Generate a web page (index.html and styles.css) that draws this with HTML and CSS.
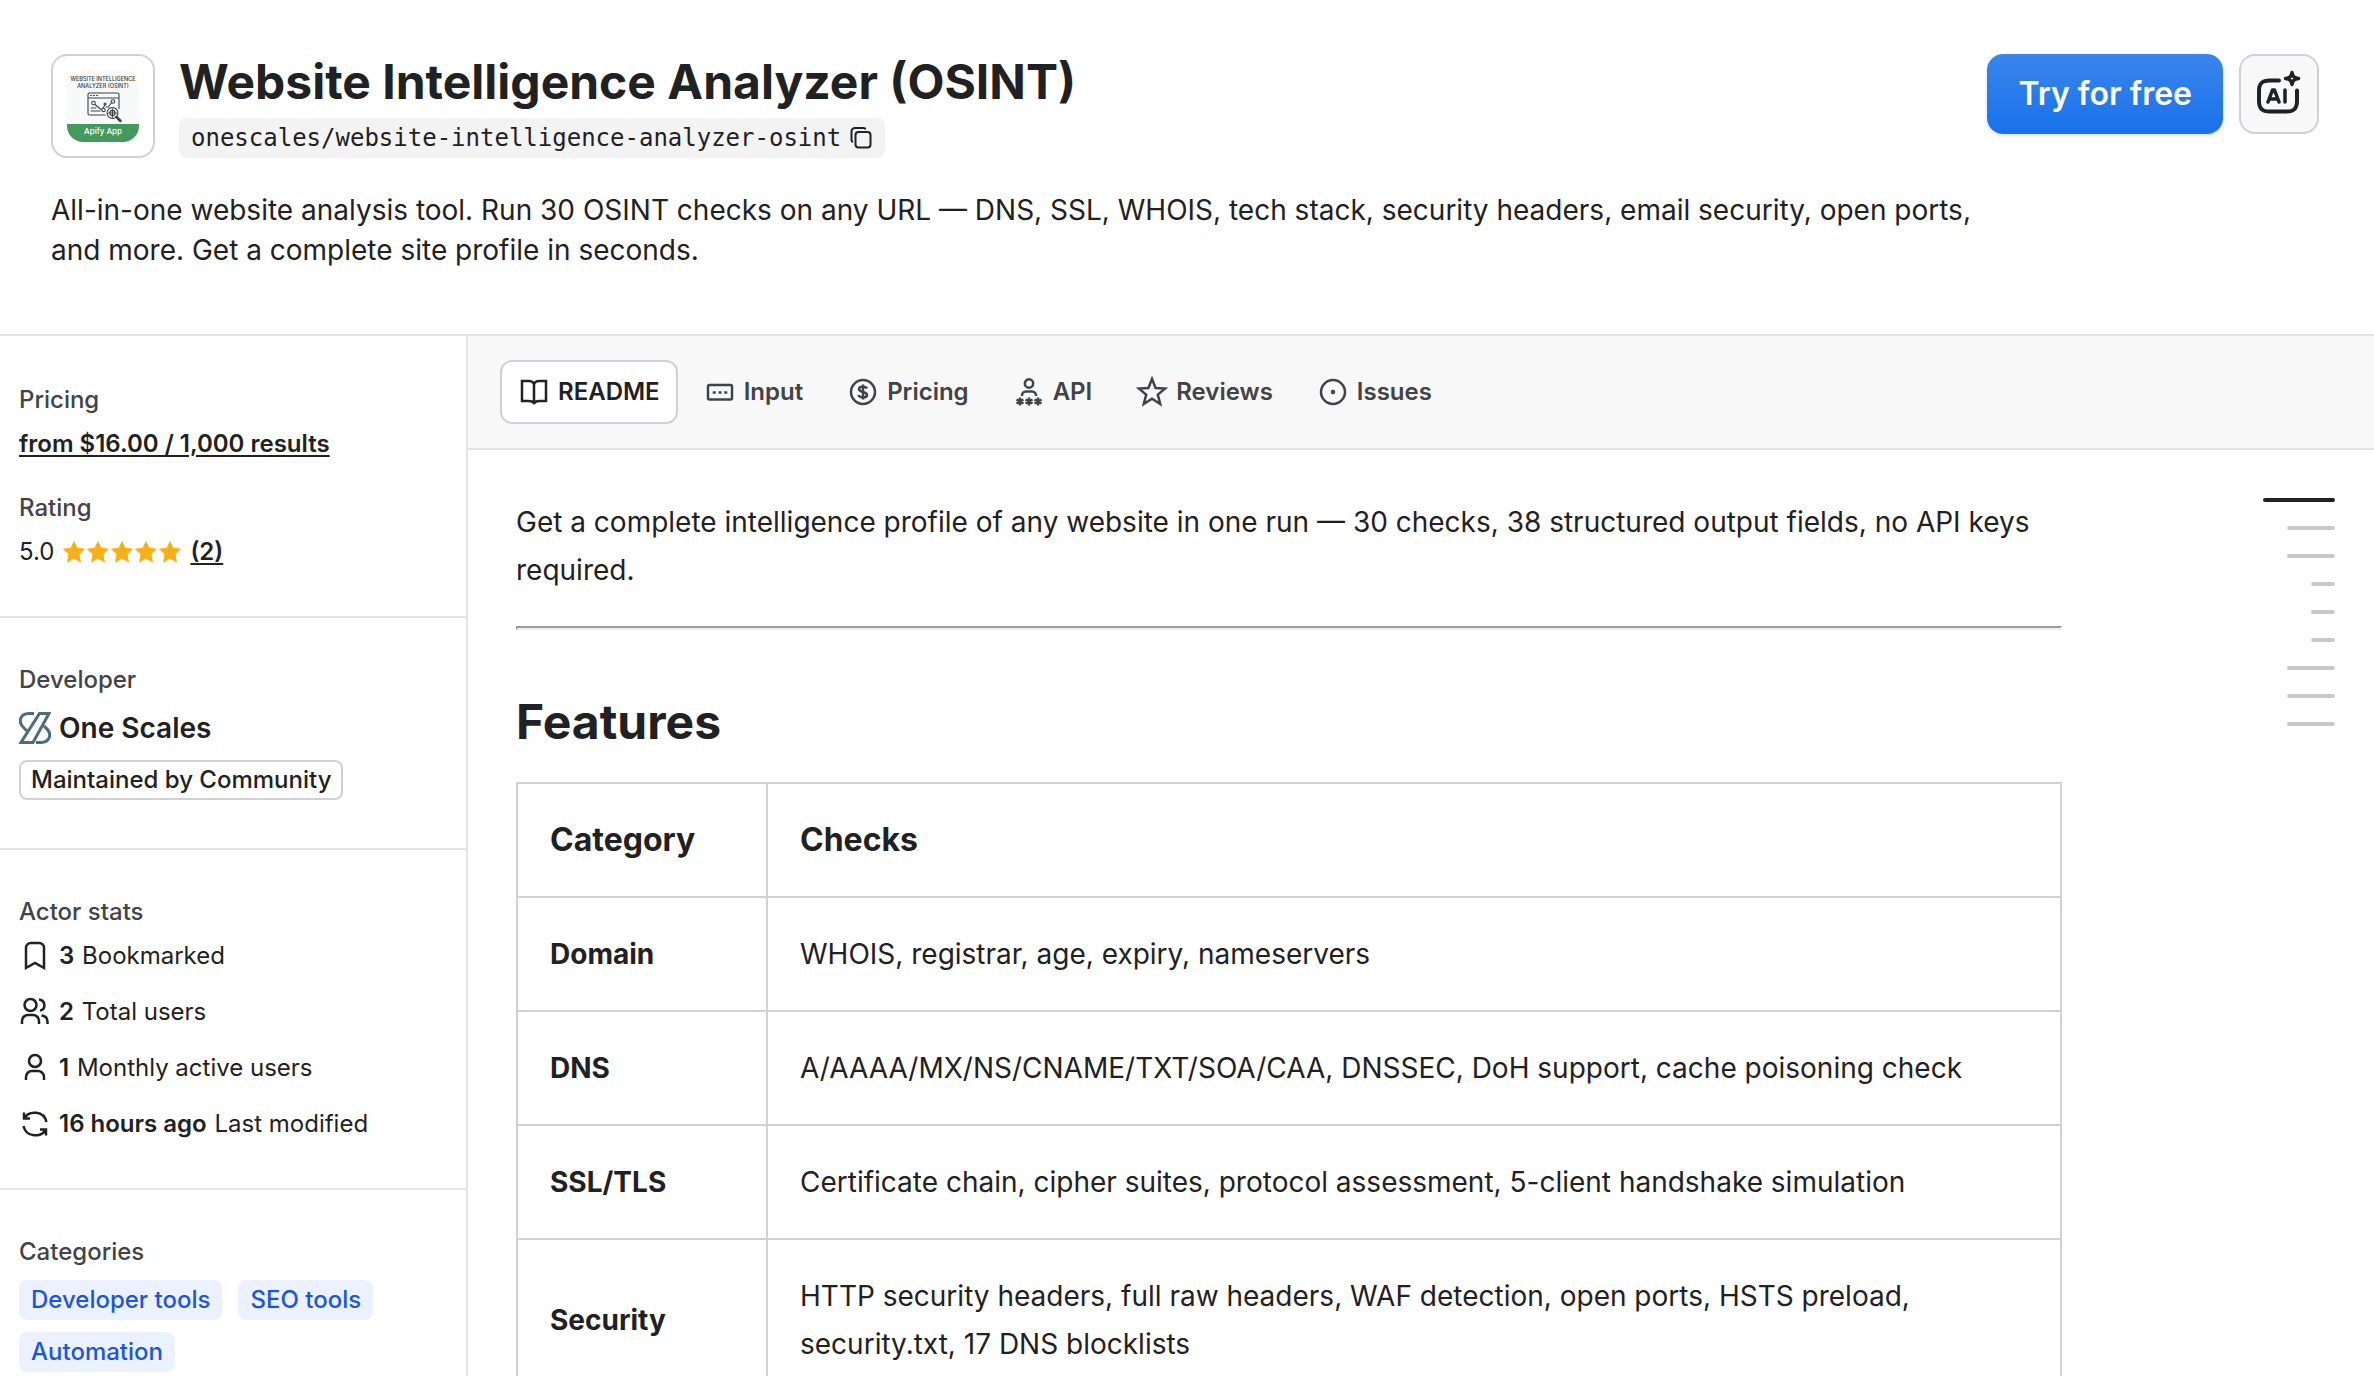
FILE: index.html
```html
<!DOCTYPE html>
<html lang="en">
<head>
<meta charset="utf-8">
<meta name="viewport" content="width=device-width, initial-scale=1">
<title>Website Intelligence Analyzer (OSINT)</title>
<link rel="stylesheet" href="styles.css">
</head>
<body>
<header class="actor-header">
  <div class="header-top">
    <div class="identity">
      <div class="actor-logo">
        <svg viewBox="0 0 72 72" width="72" height="72" role="img" aria-label="Website Intelligence Analyzer logo">
          <defs><clipPath id="logo-clip"><rect width="72" height="72" rx="16"/></clipPath></defs>
          <g clip-path="url(#logo-clip)">
            <rect width="72" height="72" fill="#f8f9f9"/>
            <rect y="54" width="72" height="18" fill="#449a5c"/>
          </g>
          <g font-family="Inter, sans-serif" text-anchor="middle">
            <text x="36" y="11" font-size="5.5" font-weight="500" fill="#33383d">WEBSITE INTELLIGENCE</text>
            <text x="36" y="17.500" font-size="5.5" font-weight="500" fill="#33383d">ANALYZER (OSINT)</text>
            <text x="36" y="64" font-size="8" font-weight="500" fill="#fff">Apify App</text>
          </g>
          <g fill="none" stroke="#3d4347" stroke-width="1.1" stroke-linecap="round">
            <path d="M38 45H22.500a1.500 1.500 0 0 1-1.500-1.500v-19a1.500 1.500 0 0 1 1.500-1.500h28a1.500 1.500 0 0 1 1.500 1.500v14M21 28h31M23.500 25.500h1M26.500 25.500h1M29.500 25.500h1M28 34.500l6 5M36 38l2-3M39 37l3 0M42 36l3-4M24 38h5M24 41h9"/>
            <circle cx="26.500" cy="33" r="1.800"/><circle cx="46" cy="31.500" r="1.800"/><circle cx="36.500" cy="40" r="1.700"/><circle cx="38" cy="34" r="1"/>
            <circle cx="45.500" cy="43" r="5.400" fill="#f8f9f9"/><circle cx="45.500" cy="43" r="2.600"/><path d="M45.500 39v8M41.500 43h8"/>
            <path d="M49.500 47l4 4" stroke-width="2.500"/>
          </g>
        </svg>
      </div>
      <div class="identity-text">
        <h1>Website Intelligence Analyzer (OSINT)</h1>
        <div class="slug">
          <code>onescales/website-intelligence-analyzer-osint</code>
          <button class="copy" type="button" aria-label="Copy"><svg viewBox="0 0 24 24" width="24" height="24"><path d="M16.500 3.500A2 2 0 0 0 14.500 2H6a3.500 3.500 0 0 0-3.500 3.500V14a2 2 0 0 0 1.500 2"/><rect x="6.500" y="6" width="15" height="15.500" rx="3"/></svg></button>
        </div>
      </div>
    </div>
    <div class="actions">
      <button class="primary" type="button">Try for free</button>
      <button class="ai" type="button" aria-label="AI options">
        <svg viewBox="0 0 48 48" width="48" height="48"><path d="M24 10.500h-9.500C7 10.500 4 13.500 4 21v10c0 7.500 3 10.500 10.500 10.500h17C39 41.500 42 38.500 42 31V20.500"/><path d="M13 32l4.500-12h2L24 32M15 29h7.500M30 20v12" stroke-width="3.500"/><path d="M37 2.500c.7 4 2 5.300 6.500 6-4.500.7-5.800 2-6.500 6-.7-4-2-5.300-6.500-6 4.500-.7 5.800-2 6.500-6z" stroke-width="3.500"/></svg>
      </button>
    </div>
  </div>
  <p class="description">All-in-one website analysis tool. Run 30 OSINT checks on any URL — DNS, SSL, WHOIS, tech stack, security headers, email security, open ports, and more. Get a complete site profile in seconds.</p>
</header>

<div class="layout">
  <aside class="sidebar">
    <section>
      <div class="field">
        <h2>Pricing</h2>
        <a class="strong-link" href="#pricing">from $16.00 / 1,000 results</a>
      </div>
      <div class="field">
        <h2>Rating</h2>
        <div class="rating">
          <span>5.0</span>
          <svg class="stars" viewBox="0 0 120 24" width="120" height="24" role="img" aria-label="5 stars">
            <defs><path id="star" d="M12 1.700l3.100 6.600 7.300.9-5.400 5 1.400 7.600L12 18.200l-6.400 3.600L7 14.200l-5.400-5 7.300-.9z"/></defs>
            <use href="#star"/><use href="#star" x="24"/><use href="#star" x="48"/><use href="#star" x="72"/><use href="#star" x="96"/>
          </svg>
          <a class="strong-link" href="#reviews">(2)</a>
        </div>
      </div>
    </section>
    <section>
      <h2>Developer</h2>
      <a class="developer" href="#developer">
        <svg viewBox="0 0 32 32" width="32" height="32" aria-hidden="true"><path d="M15 1.500H10C1 1.500-1.500 10 5 16l3 3M20.500 1.500H30L14 30.500H2zM17 30.500h5c9 0 11.500-9 5-14.500l-2-2"/></svg>
        <span>One Scales</span>
      </a>
      <div class="badge">Maintained by Community</div>
    </section>
    <section>
      <h2>Actor stats</h2>
      <ul class="stats">
        <li><svg viewBox="0 0 32 32" width="32" height="32"><path d="M7 28V8a5 5 0 0 1 5-5h8a5 5 0 0 1 5 5v20l-9-5z"/></svg><span><strong>3</strong> Bookmarked</span></li>
        <li><svg viewBox="0 0 32 32" width="32" height="32"><circle cx="11.500" cy="9" r="6"/><path d="M3 28v-3a6 6 0 0 1 6-6h5a6 6 0 0 1 6 6v3M20 3.500c7 1 7 10 1 11M22.500 19.500c4 .5 6 3 6 6V28"/></svg><span><strong>2</strong> Total users</span></li>
        <li><svg viewBox="0 0 32 32" width="32" height="32"><circle cx="16" cy="9" r="6"/><path d="M7 28v-3a6 6 0 0 1 6-6h6a6 6 0 0 1 6 6v3"/></svg><span><strong>1</strong> Monthly active users</span></li>
        <li><svg viewBox="0 0 32 32" width="32" height="32"><path d="M5 10.500C10 2 25 2.500 27.500 14M5 4.500v6h6M27 21.500C22 30 7 29.500 4.500 18M27 27.500v-6h-6"/></svg><span><strong>16 hours ago</strong> Last modified</span></li>
      </ul>
    </section>
    <section>
      <h2>Categories</h2>
      <div class="categories">
        <a href="#developer-tools">Developer tools</a>
        <a href="#seo-tools">SEO tools</a>
        <a href="#automation">Automation</a>
      </div>
    </section>
  </aside>

  <main>
    <nav class="tabs" aria-label="Actor sections">
      <a class="active" href="#readme" aria-current="page"><svg viewBox="0 0 32 32" width="32" height="32"><path d="M16 8c-1-2-3-3-5-3H4v20h7c2 0 4 1 5 2 1-1 3-2 5-2h7V5h-7c-2 0-4 1-5 3zM16 8v19"/></svg>README</a>
      <a href="#input"><svg viewBox="0 0 32 32" width="32" height="32"><rect x="4" y="9" width="24" height="14.500" rx="1.500"/><path d="M10 16.500h.5M15.800 16.500h.5M21.500 16.500h.5" stroke-linecap="square"/></svg>Input</a>
      <a href="#pricing"><svg viewBox="0 0 32 32" width="32" height="32"><circle cx="16" cy="16" r="12"/><path d="M20 12.500c-1-2.500-8-2.500-8 .5 0 4 8 2 8 6 0 3.200-7.500 3.200-8.500 0M16 8.500v15"/></svg>Pricing</a>
      <a href="#api"><svg viewBox="0 0 32 32" width="32" height="32"><circle cx="16" cy="7.500" r="4.200"/><path d="M9 20v-.5a4 4 0 0 1 4-4h6a4 4 0 0 1 4 4v.5"/><path d="M7 21.500v8M3.500 23.500l7 4M10.500 23.500l-7 4M16 21.500v8M12.500 23.500l7 4M19.500 23.500l-7 4M25 21.500v8M21.500 23.500l7 4M28.500 23.500l-7 4"/></svg>API</a>
      <a href="#reviews"><svg viewBox="0 0 32 32" width="32" height="32"><path d="M16 3l3.600 9 9.400.6-7.200 6 2.400 9.400-8.200-5.200L7.800 28l2.400-9.400-7.200-6 9.400-.6z"/></svg>Reviews</a>
      <a href="#issues"><svg viewBox="0 0 32 32" width="32" height="32"><circle cx="16" cy="16" r="12"/><circle cx="16" cy="16" r="1.300" stroke-width="2"/></svg>Issues</a>
    </nav>
    <div class="content">
      <article class="readme">
        <p>Get a complete intelligence profile of any website in one run — 30 checks, 38 structured output fields, no API keys required.</p>
        <hr>
        <h2>Features</h2>
        <table>
          <thead><tr><th scope="col">Category</th><th scope="col">Checks</th></tr></thead>
          <tbody>
            <tr><th scope="row">Domain</th><td>WHOIS, registrar, age, expiry, nameservers</td></tr>
            <tr><th scope="row">DNS</th><td>A/AAAA/MX/NS/CNAME/TXT/SOA/CAA, DNSSEC, DoH support, cache poisoning check</td></tr>
            <tr><th scope="row">SSL/TLS</th><td>Certificate chain, cipher suites, protocol assessment, 5-client handshake simulation</td></tr>
            <tr><th scope="row">Security</th><td>HTTP security headers, full raw headers, WAF detection, open ports, HSTS preload, security.txt, 17 DNS blocklists</td></tr>
          </tbody>
        </table>
      </article>
      <div class="outline" aria-hidden="true">
        <i class="level-1 current"></i><i class="level-2"></i><i class="level-2"></i><i class="level-3"></i><i class="level-3"></i><i class="level-3"></i><i class="level-2"></i><i class="level-2"></i><i class="level-2"></i>
      </div>
    </div>
  </main>
</div>
</body>
</html>
```
FILE: styles.css
```css
*, *::before, *::after { box-sizing: border-box; }

body {
  margin: 0;
  height: 100vh;
  overflow: hidden;
  background: #fff;
  color: #1f2123;
  font-family: Inter, "Liberation Sans", sans-serif;
  font-size: 24px;
  line-height: 32px;
}

h1, h2, p, ul { margin: 0; padding: 0; }
a { color: inherit; text-decoration: none; }
button { font: inherit; color: inherit; padding: 0; border: 0; background: none; cursor: pointer; }
svg { display: block; flex: none; fill: none; stroke: currentColor; stroke-width: 2.500; }

/* Header */
.actor-header {
  padding: 54px 55px 64px 51px;
  border-bottom: 2px solid #e4e4e5;
}
.header-top { display: flex; justify-content: space-between; align-items: flex-start; }
.identity { display: flex; gap: 24px; }
.actor-logo {
  display: grid;
  place-items: center;
  width: 104px;
  height: 104px;
  border: 2px solid #d0d1d6;
  border-radius: 16px;
}
.actor-logo svg { stroke: none; }
h1 { font-size: 48px; line-height: 56px; font-weight: 700; }
.slug {
  display: flex;
  align-items: center;
  gap: 8px;
  width: fit-content;
  height: 40px;
  margin-top: 8px;
  padding: 0 12px;
  border-radius: 8px;
  background: #f3f3f3;
}
.slug code { font-family: "DejaVu Sans Mono", "Liberation Mono", monospace; font-size: 24px; }
.copy svg { stroke-width: 2; }
.actions { display: flex; gap: 16px; }
.primary {
  height: 80px;
  padding: 0 31px;
  border-radius: 16px;
  background: linear-gradient(#3b84ec, #1872eb);
  box-shadow: 0 2px 4px rgba(31, 33, 35, 0.15);
  color: #fff;
  font-size: 32px;
  font-weight: 600;
}
.ai {
  display: grid;
  place-items: center;
  width: 80px;
  height: 80px;
  border: 2px solid #d0d1d6;
  border-radius: 16px;
  background: #f8f8f8;
}
.ai svg { stroke-width: 4; stroke-linecap: round; stroke-linejoin: round; }
.description { max-width: 1940px; margin-top: 32px; font-size: 28px; line-height: 40px; }

/* Page columns */
.layout { display: grid; grid-template-columns: 468px 1fr; }

/* Sidebar */
.sidebar { border-right: 2px solid #e4e4e5; }
.sidebar section { padding: 48px 19px; }
.sidebar section + section { padding-top: 46px; border-top: 2px solid #e4e4e5; }
.sidebar h2 { color: #414347; font-size: 24px; line-height: 32px; font-weight: 500; }
.field { display: flex; flex-direction: column; gap: 12px; align-items: flex-start; }
.field + .field { margin-top: 32px; }
.strong-link { font-weight: 600; text-decoration: underline; text-decoration-thickness: 2px; text-underline-offset: 3px; }
.rating { display: flex; align-items: center; gap: 8px; }
.stars { fill: #f6b118; stroke: #f6b118; stroke-width: 1; stroke-linejoin: round; }
.developer { display: flex; align-items: center; gap: 8px; margin-top: 16px; font-size: 28px; font-weight: 600; }
.developer svg { color: #4f6c7a; stroke-width: 3; }
.badge {
  width: fit-content;
  margin-top: 16px;
  padding: 2px 10px;
  border: 2px solid #d0d1d6;
  border-radius: 8px;
  font-weight: 500;
  line-height: 32px;
}
.stats { display: grid; gap: 24px; margin-top: 12px; list-style: none; }
.stats li { display: flex; align-items: center; gap: 8px; }
.stats strong { font-weight: 600; margin-right: 1px; }
.categories { display: flex; flex-wrap: wrap; gap: 12px 16px; margin-top: 12px; }
.categories a { padding: 4px 12px; border-radius: 8px; background: #ebf1ff; color: #1a56db; font-weight: 500; }

/* Tabs */
.tabs {
  display: flex;
  align-items: center;
  height: 114px;
  padding: 0 32px;
  border-bottom: 2px solid #e4e4e5;
  background: #f8f8f8;
}
.tabs a {
  display: flex;
  align-items: center;
  gap: 8px;
  height: 64px;
  padding: 0 16px;
  border: 2px solid transparent;
  border-radius: 12px;
  color: #414347;
  font-weight: 600;
}
.tabs a + a { margin-left: 8px; }
.tabs .active { border-color: #d0d1d6; background: #fff; color: #1f2123; }

/* Readme */
.content { display: flex; justify-content: space-between; padding: 48px 39px 48px 48px; }
.readme { flex: 0 1 1546px; font-size: 28px; line-height: 48px; }
.readme hr { margin: 32px 0 0; border: 2px solid; border-color: #9a9a9a #eee #eee #9a9a9a; }
.readme h2 { margin-top: 60px; font-size: 48px; line-height: 64px; font-weight: 700; }
.readme table { width: 100%; margin-top: 28px; border-collapse: collapse; }
.readme th, .readme td { padding: 32px; border: 2px solid #d0d1d6; text-align: left; font-weight: 400; }
.readme th { width: 250px; font-weight: 700; }
.readme thead th { font-size: 32px; }
.readme thead th + th { width: auto; }

.outline { display: flex; flex-direction: column; align-items: flex-end; gap: 24px; }
.outline i { height: 4px; border-radius: 2px; background: #c8c9cd; }
.outline .level-1 { width: 72px; }
.outline .level-2 { width: 48px; }
.outline .level-3 { width: 24px; }
.outline .current { background: #1f2123; }
```
